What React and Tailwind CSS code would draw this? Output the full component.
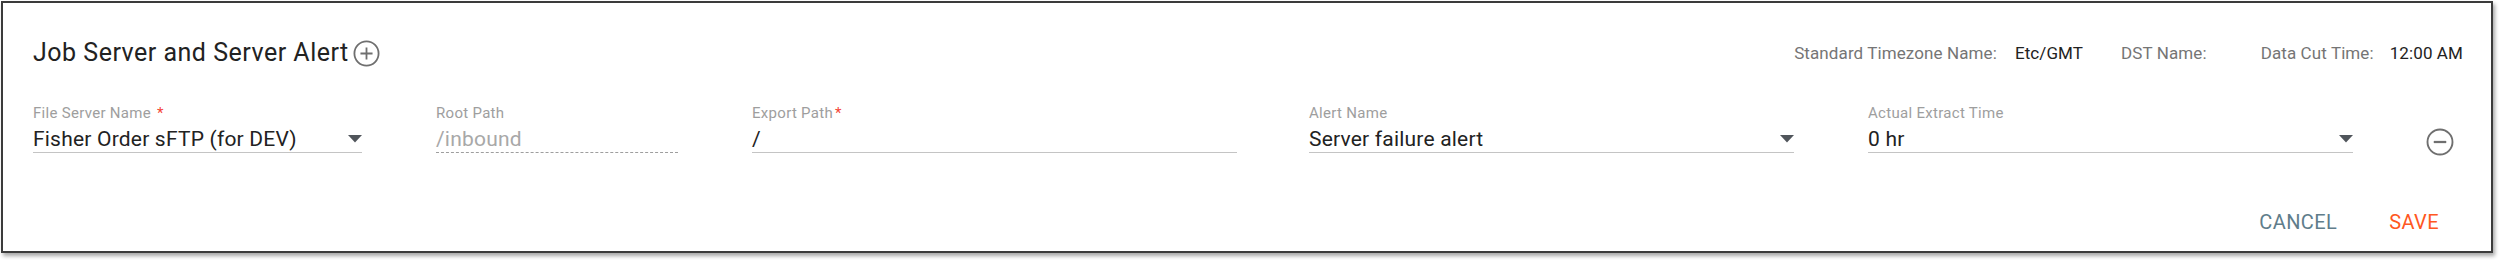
import React from "react";

function Caret() {
  return (
    <svg width="14" height="8" viewBox="0 0 14 8" className="shrink-0">
      <path d="M0 0 L14 0 L7 7.5 Z" fill="#50555b" />
    </svg>
  );
}

function Field({ label, required, spaced, value, width, select, dashed, muted, ml }) {
  return (
    <div className={`flex flex-col ${width} ${ml}`}>
      <div className="text-[15px] leading-[18px] text-[#9e9e9e] tracking-[0.3px] whitespace-nowrap">
        {label}
        {required && <span className={`text-[#f44336] ${spaced ? "ml-[6px]" : "ml-[2px]"}`}>*</span>}
      </div>
      <div
        className={`mt-[3px] h-[28px] flex items-center justify-between border-b ${
          dashed ? "border-dashed border-[#9e9e9e]" : "border-[#c4c4c4]"
        }`}
      >
        <span
          className={`text-[21px] leading-[26px] tracking-[0.2px] whitespace-nowrap ${
            muted ? "text-[#a8a8a8]" : "text-[#222]"
          }`}
        >
          {value}
        </span>
        {select && <Caret />}
      </div>
    </div>
  );
}

export default function App() {
  return (
    <div className="w-[2500px] h-[260px] bg-white pt-[1px] pl-[1px]" style={{ fontFamily: "Roboto, 'Liberation Sans', sans-serif" }}>
      <div className="w-[2492px] h-[252px] border-2 border-[#3b3b3b] shadow-[2px_3px_4px_rgba(0,0,0,0.35)] flex flex-col pl-[30px] pr-[28px] pt-[34px]">
        <div className="flex items-center justify-between h-[32px]">
          <div className="flex items-center">
            <span className="text-[25px] leading-[32px] tracking-[0.5px] text-[#222]">Job Server and Server Alert</span>
            <svg width="29" height="29" viewBox="0 0 24 24" className="ml-[3px]">
              <circle cx="12" cy="12" r="10" fill="none" stroke="#6f6f6f" strokeWidth="1.5" />
              <path d="M12 7v10M7 12h10" stroke="#6f6f6f" strokeWidth="1.5" />
            </svg>
          </div>
          <div className="flex items-center text-[17px] leading-[22px] tracking-[0.1px]">
            <span className="text-[#757575]">Standard Timezone Name:</span>
            <span className="text-[#222] ml-[18px]">Etc/GMT</span>
            <span className="text-[#757575] ml-[38px]">DST Name:</span>
            <span className="text-[#757575] ml-[54px]">Data Cut Time:</span>
            <span className="text-[#222] ml-[16px]">12:00 AM</span>
          </div>
        </div>
        <div className="flex items-start mt-[35px]">
          <Field label="File Server Name" required spaced value="Fisher Order sFTP (for DEV)" width="w-[329px]" select />
          <Field label="Root Path" value="/inbound" width="w-[242px]" ml="ml-[74px]" dashed muted />
          <Field label="Export Path" required value="/" width="w-[485px]" ml="ml-[74px]" />
          <Field label="Alert Name" value="Server failure alert" width="w-[485px]" ml="ml-[72px]" select />
          <Field label="Actual Extract Time" value="0 hr" width="w-[485px]" ml="ml-[74px]" select />
          <svg width="30" height="30" viewBox="0 0 24 24" className="ml-[72px] mt-[23px]">
            <circle cx="12" cy="12" r="10" fill="none" stroke="#6f6f6f" strokeWidth="1.5" />
            <path d="M7 12h10" stroke="#6f6f6f" strokeWidth="1.8" />
          </svg>
        </div>
        <div className="flex justify-end mt-[53px] pr-[24px] text-[20px] leading-[24px] tracking-[0.4px]">
          <span className="text-[#607d8b]">CANCEL</span>
          <span className="text-[#ff5722] ml-[52px]">SAVE</span>
        </div>
      </div>
    </div>
  );
}
